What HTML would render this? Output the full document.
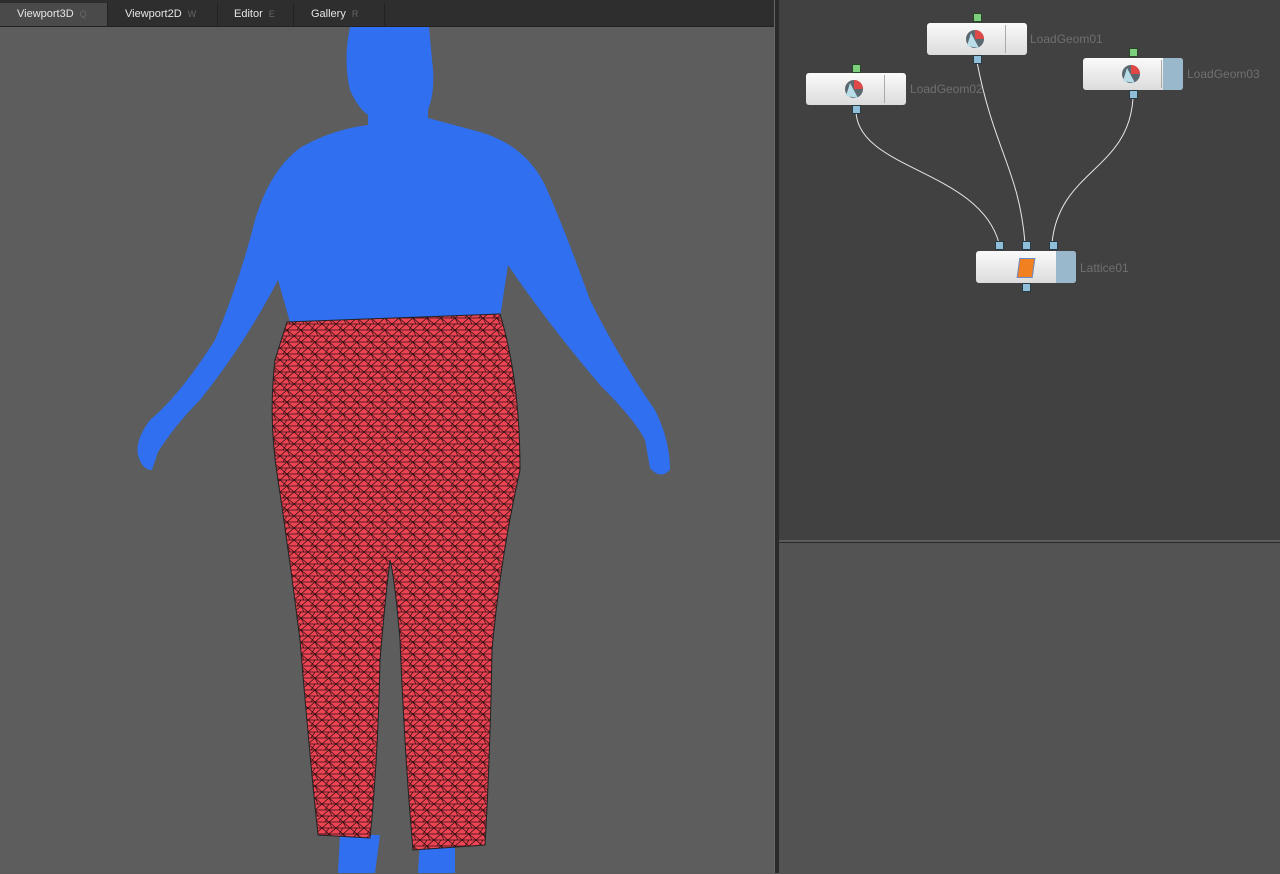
<!DOCTYPE html>
<html><head><meta charset="utf-8"><style>
body{margin:0;width:1280px;height:873px;overflow:hidden;background:#5c5c5c;font-family:"Liberation Sans",sans-serif;position:relative}
.tabs{position:absolute;left:0;top:0;width:774px;height:26px;background:#2e2e2e;border-bottom:1px solid #222}
.tab{position:absolute;top:3px;height:23px;line-height:23px;font-size:11px;color:#e6e6e6;border-right:1px solid #222}
.tab span{color:#666;margin-left:6px;font-size:9px}
.vp{position:absolute;left:0;top:27px;width:774px;height:846px;background:#5d5d5d;overflow:hidden}
.sep{position:absolute;left:774px;top:0;width:4px;height:873px;background:#2a2a2a;border-left:1px solid #666}
.ne{position:absolute;left:779px;top:0;width:501px;height:540px;background:#414141}
.bot{position:absolute;left:779px;top:542px;width:501px;height:331px;background:#535353;border-top:1px solid #2a2a2a}
.node{position:absolute;width:100px;height:32px;border-radius:3px;background:linear-gradient(#fafafa,#dcdcdc)}
.node .d{position:absolute;left:78px;top:2px;width:1px;height:28px;background:#aaa}
.lbl{position:absolute;font-size:12px;color:#6f6f6f}
.p{position:absolute;width:7px;height:7px;background:#8fbfd8;border:1px solid #2a3a44}
.g{background:#7ccf7c;border-color:#2a442a}
</style></head><body>
<div class="tabs">
<div class="tab" style="left:0;width:108px;background:#4a4a4a;padding-left:17px;box-sizing:border-box">Viewport3D<span>Q</span></div>
<div class="tab" style="left:109px;width:109px;padding-left:16px;box-sizing:border-box">Viewport2D<span>W</span></div>
<div class="tab" style="left:219px;width:75px;padding-left:15px;box-sizing:border-box">Editor<span>E</span></div>
<div class="tab" style="left:295px;width:90px;padding-left:16px;box-sizing:border-box">Gallery<span>R</span></div>
</div>
<div class="vp">
<svg width="774" height="846" viewBox="0 27 774 846">
<defs>
<pattern id="m" width="14" height="12" patternUnits="userSpaceOnUse">
<rect width="14" height="12" fill="#ec4453"/>
<path d="M0 0L14 0M0 6L14 6M0 12L14 12M0 0L7 6L0 12M14 0L7 6L14 12M7 0L3 6M7 6L10 12" stroke="#2a0d10" stroke-width="0.7" fill="none"/>
</pattern>
</defs>
<g fill="#2f6ff0">
<path d="M350 27 Q343 60 350 90 Q358 108 368 115 L368 125 Q330 130 300 148 Q270 170 255 220 Q240 280 215 340 Q180 395 150 420 Q135 440 138 455 Q142 470 152 470 L158 452 Q175 425 200 400 Q240 350 270 295 L278 280 L290 322 L500 318 L508 265 Q545 320 600 385 Q635 420 645 440 L650 468 Q660 480 670 470 Q670 440 655 410 Q620 360 590 300 Q565 230 545 185 Q525 145 480 132 L428 118 L428 110 Q436 90 432 60 L429 27 Z"/>
<path d="M340 835 L380 835 L375 873 L338 873 Z"/>
<path d="M420 840 L455 840 L455 873 L418 873 Z"/>
</g>
<path d="M287 322 L500 314 Q520 380 520 470 Q500 560 492 650 Q490 760 485 845 L413 850 Q405 760 400 640 Q395 580 390 560 Q385 600 380 660 Q378 760 370 838 L318 835 Q310 760 300 640 Q290 560 278 480 Q268 420 275 360 Z" fill="url(#m)" stroke="#222" stroke-width="1"/>
</svg>
</div>
<div class="sep"></div>
<div class="ne">
<svg width="501" height="540" style="position:absolute;left:0;top:0" fill="none" stroke="#e8e8e8" stroke-width="1">
<path d="M77 112 C80 170 200 170 220 243"/>
<path d="M198 62 C215 150 240 170 246 243"/>
<path d="M354 98 C350 170 280 170 273 243"/>
</svg>
<div class="node" style="left:148px;top:23px"><div class="d"></div></div>
<div class="node" style="left:27px;top:73px"><div class="d"></div></div>
<div class="node" style="left:304px;top:58px"><div class="d"></div><div style="position:absolute;left:80px;top:0;width:20px;height:32px;background:#9ab8cc;border-radius:0 3px 3px 0"></div></div>
<div class="node" style="left:197px;top:251px"><div style="position:absolute;left:80px;top:0;width:20px;height:32px;background:#9ab8cc;border-radius:0 3px 3px 0"></div><div style="position:absolute;left:42px;top:7px;width:14px;height:18px;background:#f08020;border:1px solid #6a8acc;transform:skewX(-8deg)"></div></div>
<svg width="501" height="300" style="position:absolute;left:0;top:0">
<g><circle cx="196" cy="39" r="9" fill="#5a6870"/><path d="M196 30 A9 9 0 0 1 205 39 L196 39Z" fill="#e04848"/><path d="M192 33 L200 48 L188 46Z" fill="#b8dce8"/></g>
<g><circle cx="75" cy="89" r="9" fill="#5a6870"/><path d="M75 80 A9 9 0 0 1 84 89 L75 89Z" fill="#e04848"/><path d="M71 83 L79 98 L67 96Z" fill="#b8dce8"/></g>
<g><circle cx="352" cy="74" r="9" fill="#5a6870"/><path d="M352 65 A9 9 0 0 1 361 74 L352 74Z" fill="#e04848"/><path d="M348 68 L356 83 L344 81Z" fill="#b8dce8"/></g>
</svg>
<div class="p g" style="left:194px;top:13px"></div><div class="p" style="left:194px;top:55px"></div>
<div class="p g" style="left:73px;top:64px"></div><div class="p" style="left:73px;top:105px"></div>
<div class="p g" style="left:350px;top:48px"></div><div class="p" style="left:350px;top:90px"></div>
<div class="p" style="left:216px;top:241px"></div><div class="p" style="left:243px;top:241px"></div><div class="p" style="left:270px;top:241px"></div><div class="p" style="left:243px;top:283px"></div>
<div class="lbl" style="left:251px;top:32px">LoadGeom01</div>
<div class="lbl" style="left:131px;top:82px">LoadGeom02</div>
<div class="lbl" style="left:408px;top:67px">LoadGeom03</div>
<div class="lbl" style="left:301px;top:261px">Lattice01</div>
</div>
<div class="bot"></div>
</body></html>
